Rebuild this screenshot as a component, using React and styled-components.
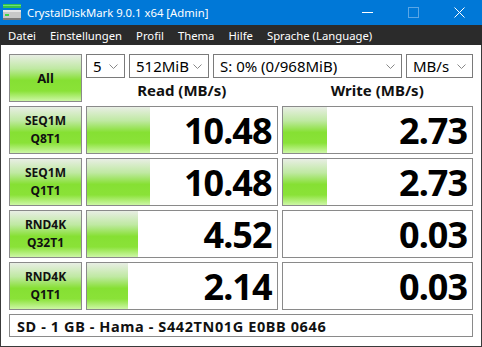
import React from 'react';
import styled, { createGlobalStyle } from 'styled-components';

const Global = createGlobalStyle`
  html, body { margin: 0; padding: 0; background: #fff; }
  body { font-family: "Noto Sans", "Open Sans", sans-serif; }
  * { box-sizing: border-box; }
`;

const GREEN = 'linear-gradient(to bottom, #e8eee4 0%, #bfe9a2 30%, #86e033 55%, #8ae238 78%, #cdf7a6 100%)';

const Window = styled.div`
  width: 482px;
  height: 347px;
  display: flex;
  flex-direction: column;
  overflow: hidden;
`;

const TitleBar = styled.div`
  flex: none;
  height: 25px;
  background: #0078d7;
  color: #fff;
  display: flex;
  align-items: center;
  font-size: 11.3px;
  padding-left: 3px;
`;

const TitleText = styled.span`
  margin-left: 6px;
  flex: 1;
  white-space: nowrap;
`;

const Controls = styled.div`
  display: flex;
  height: 100%;
`;

const Ctrl = styled.div`
  width: 46px;
  height: 100%;
  display: flex;
  align-items: center;
  justify-content: center;
`;

const MenuBar = styled.div`
  flex: none;
  height: 20px;
  background: #2b2b2b;
  color: #fff;
  display: flex;
  align-items: center;
  font-size: 11.3px;
  padding-left: 1px;
`;

const MenuItem = styled.span`
  padding: 0 7px;
  white-space: nowrap;
`;

const Content = styled.div`
  flex: 1;
  background: #fff;
  border: 1px solid #3a3a3a;
  border-top: none;
  padding: 9px 8px;
  display: grid;
  grid-template-columns: 73px 1fr 1fr;
  grid-template-rows: repeat(5, 48px) 23px;
  gap: 4px;
`;

const GreenButton = styled.div`
  background: ${GREEN};
  border: 1px solid #8a8a8a;
  display: flex;
  flex-direction: column;
  align-items: center;
  justify-content: center;
  font-weight: 700;
  font-size: ${({ $big }) => ($big ? '13px' : '12px')};
  line-height: 18px;
  color: #111;
`;

const TopArea = styled.div`
  grid-column: 2 / 4;
  display: flex;
  flex-direction: column;
`;

const SelectRow = styled.div`
  display: flex;
  gap: 4px;
  height: 24px;
`;

const Select = styled.div`
  width: ${({ $w }) => $w}px;
  flex: ${({ $grow }) => ($grow ? 1 : 'none')};
  border: 1px solid #7a7a7a;
  background: #fff;
  display: flex;
  align-items: center;
  padding: 0 6px 0 6px;
  font-size: 15px;
  color: #000;
  span { flex: 1; white-space: nowrap; }
`;

const Headers = styled.div`
  flex: 1;
  display: grid;
  grid-template-columns: 1fr 1fr;
  gap: 4px;
`;

const Header = styled.div`
  display: flex;
  align-items: center;
  justify-content: center;
  font-weight: 700;
  font-size: 15px;
  color: #111;
  padding-bottom: 1px;
`;

const Cell = styled.div`
  position: relative;
  border: 1px solid #8a8a8a;
  background: #fff;
  display: flex;
  align-items: center;
  justify-content: flex-end;
  padding-right: 5px;
  overflow: hidden;
`;

const Bar = styled.div`
  position: absolute;
  left: 0;
  top: 0;
  bottom: 0;
  background: ${GREEN};
`;

const Value = styled.span`
  position: relative;
  font-weight: 700;
  font-size: 36px;
  letter-spacing: -1px;
  line-height: 44px;
  color: #000;
  margin-top: 1px;
`;

const Footer = styled.div`
  grid-column: 1 / 4;
  border: 1px solid #8a8a8a;
  display: flex;
  align-items: center;
  padding-left: 7px;
  font-weight: 700;
  font-size: 14.5px;
  letter-spacing: 0.6px;
  color: #111;
`;

const Chevron = () => (
  <svg width="9" height="5" viewBox="0 0 9 5">
    <polyline points="0.5,0.5 4.5,4.5 8.5,0.5" fill="none" stroke="#888" strokeWidth="1" />
  </svg>
);

const AppIcon = () => (
  <svg width="18" height="17" viewBox="0 0 18 17">
    <rect x="0" y="0" width="18" height="4" fill="#34c24a" />
    <rect x="0" y="1" width="18" height="1" fill="#6fe07b" />
    <rect x="0" y="6" width="18" height="10" fill="#c8c8c8" />
    <rect x="0" y="6" width="18" height="2" fill="#e6e6e6" />
    <rect x="0" y="14" width="18" height="2" fill="#7b7b7b" />
    <rect x="2" y="10" width="4" height="2" fill="#3bd24a" />
  </svg>
);

const rows = [
  { a: 'SEQ1M', b: 'Q8T1', r: 10.48, w: 2.73, rb: 63, wb: 44 },
  { a: 'SEQ1M', b: 'Q1T1', r: 10.48, w: 2.73, rb: 63, wb: 44 },
  { a: 'RND4K', b: 'Q32T1', r: 4.52, w: 0.03, rb: 51, wb: 0 },
  { a: 'RND4K', b: 'Q1T1', r: 2.14, w: 0.03, rb: 41, wb: 0 },
];

export default function App() {
  return (
    <Window>
      <Global />
      <TitleBar>
        <AppIcon />
        <TitleText>CrystalDiskMark 9.0.1 x64 [Admin]</TitleText>
        <Controls>
          <Ctrl>
            <svg width="11" height="11" viewBox="0 0 11 11"><line x1="0" y1="5.5" x2="11" y2="5.5" stroke="#fff" /></svg>
          </Ctrl>
          <Ctrl>
            <svg width="11" height="11" viewBox="0 0 11 11"><rect x="0.5" y="0.5" width="10" height="10" fill="none" stroke="#5aa6e6" /></svg>
          </Ctrl>
          <Ctrl>
            <svg width="11" height="11" viewBox="0 0 11 11"><path d="M0.5 0.5 L10.5 10.5 M10.5 0.5 L0.5 10.5" stroke="#fff" /></svg>
          </Ctrl>
        </Controls>
      </TitleBar>
      <MenuBar>
        {['Datei', 'Einstellungen', 'Profil', 'Thema', 'Hilfe', 'Sprache (Language)'].map((m) => (
          <MenuItem key={m}>{m}</MenuItem>
        ))}
      </MenuBar>
      <Content>
        <GreenButton $big>All</GreenButton>
        <TopArea>
          <SelectRow>
            <Select $w={39}><span>5</span><Chevron /></Select>
            <Select $w={80}><span>512MiB</span><Chevron /></Select>
            <Select $grow><span>S: 0% (0/968MiB)</span><Chevron /></Select>
            <Select $w={67}><span>MB/s</span><Chevron /></Select>
          </SelectRow>
          <Headers>
            <Header>Read (MB/s)</Header>
            <Header>Write (MB/s)</Header>
          </Headers>
        </TopArea>
        {rows.map((row, i) => (
          <React.Fragment key={i}>
            <GreenButton>
              <span>{row.a}</span>
              <span>{row.b}</span>
            </GreenButton>
            <Cell>
              {row.rb > 0 && <Bar style={{ width: row.rb }} />}
              <Value>{row.r.toFixed(2)}</Value>
            </Cell>
            <Cell>
              {row.wb > 0 && <Bar style={{ width: row.wb }} />}
              <Value>{row.w.toFixed(2)}</Value>
            </Cell>
          </React.Fragment>
        ))}
        <Footer>SD - 1 GB - Hama - S442TN01G E0BB 0646</Footer>
      </Content>
    </Window>
  );
}
